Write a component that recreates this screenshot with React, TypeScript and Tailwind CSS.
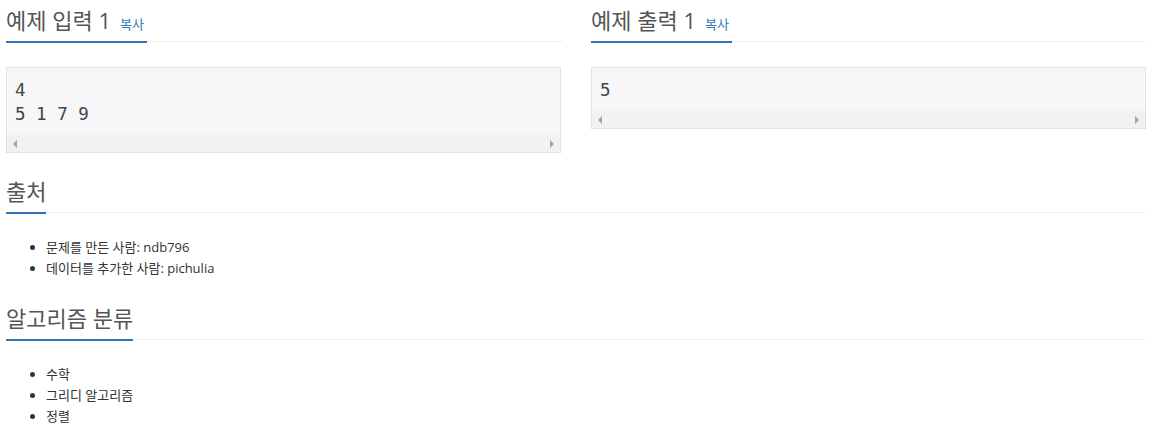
const font = { fontFamily: '"Open Sans", "Noto Sans CJK KR", sans-serif' };

function Headline({ title, copy }: { title: string; copy?: boolean }) {
  return (
    <div className="flex items-end border-b border-dotted border-[#dddddd]">
      <h2 className="mb-[-2px] flex items-baseline gap-[9px] border-b-2 border-[#3173b8] pb-[6px] text-[22px] leading-[30px] font-normal text-[#555555]">
        {title}
        {copy && <a className="pr-[3px] text-[13px] leading-none text-[#337ab7]">복사</a>}
      </h2>
    </div>
  );
}

function ScrollBar() {
  return (
    <div className="flex h-[17px] items-center justify-between bg-[#f1f1f1] px-[6px]">
      <span className="h-0 w-0 border-y-[4px] border-r-[4px] border-y-transparent border-r-[#a3a3a3]" />
      <span className="h-0 w-0 border-y-[4px] border-l-[4px] border-y-transparent border-l-[#a3a3a3]" />
    </div>
  );
}

function Sample({ title, lines }: { title: string; lines: string[] }) {
  return (
    <div>
      <Headline title={title} copy />
      <div className="mt-[25px] border border-[#e1e1e8] bg-[#f7f7f9]">
        <pre
          className="m-0 px-[8px] py-[9.5px] text-[17.5px] leading-[24px] text-[#444444]"
          style={{ fontFamily: '"DejaVu Sans Mono", monospace' }}
        >
          {lines.join('\n')}
        </pre>
        <ScrollBar />
      </div>
    </div>
  );
}

function List({ items }: { items: string[] }) {
  return (
    <ul className="list-disc pl-[40px] text-[13px] leading-[21px] text-[#333333]">
      {items.map((it) => (
        <li key={it}>{it}</li>
      ))}
    </ul>
  );
}

export default function App() {
  return (
    <div className="bg-white pl-[6px] pr-[4px] pt-[5px]" style={font}>
      <div className="grid grid-cols-2 items-start gap-[30px]">
        <Sample title="예제 입력 1" lines={['4', '5 1 7 9']} />
        <Sample title="예제 출력 1" lines={['5']} />
      </div>

      <section className="mt-[23px]">
        <Headline title="출처" />
        <div className="mt-[24px]">
          <List items={['문제를 만든 사람: ndb796', '데이터를 추가한 사람: pichulia']} />
        </div>
      </section>

      <section className="mt-[24px]">
        <Headline title="알고리즘 분류" />
        <div className="mt-[24px]">
          <List items={['수학', '그리디 알고리즘', '정렬']} />
        </div>
      </section>
    </div>
  );
}
